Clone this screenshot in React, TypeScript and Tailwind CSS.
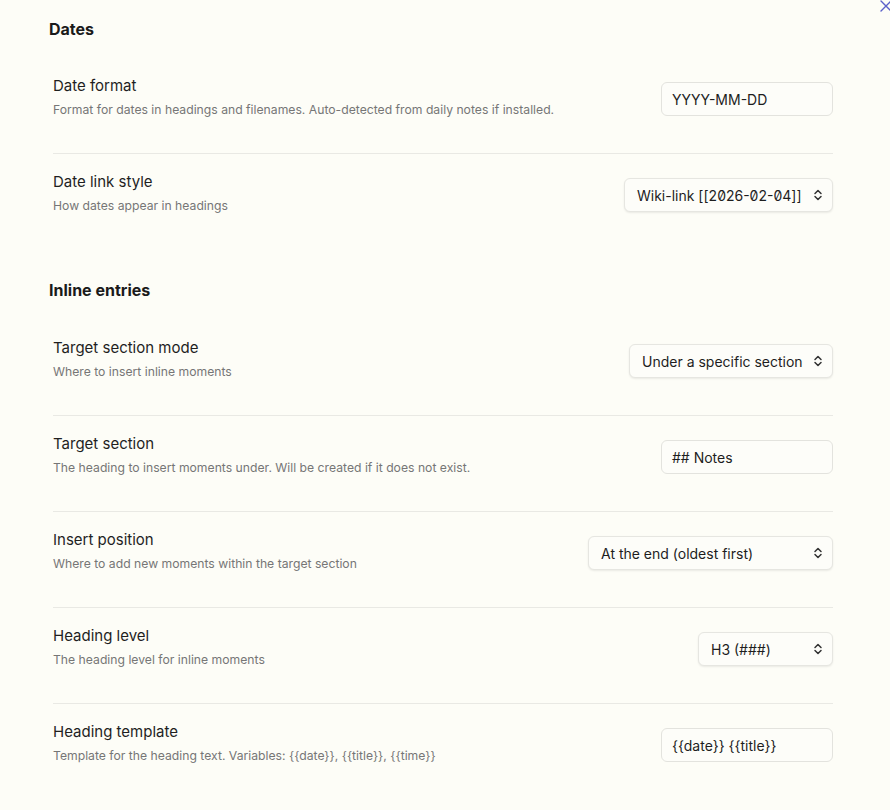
import React from "react";

const Chevrons = () => (
  <svg width="10" height="14" viewBox="0 0 10 14" fill="none" className="shrink-0">
    <path d="M2 5.5 L5 2.5 L8 5.5" stroke="#333" strokeWidth="1.5" strokeLinecap="round" strokeLinejoin="round" />
    <path d="M2 8.5 L5 11.5 L8 8.5" stroke="#333" strokeWidth="1.5" strokeLinecap="round" strokeLinejoin="round" />
  </svg>
);

const TextInput = ({ value }: { value: string }) => (
  <div className="mt-[4px] flex h-[34px] w-[172px] items-center rounded-[6px] border border-[#e3e3de] bg-[#fdfdf9] px-[10px] text-[14px] text-[#1e1e1e]">
    {value}
  </div>
);

const Select = ({ children, width }: { children: React.ReactNode; width: string }) => (
  <div
    className={`mt-[4px] flex h-[34px] items-center justify-between rounded-[6px] border border-[#e6e6e1] bg-[#fdfdf9] pl-[12px] pr-[9px] text-[14px] text-[#1e1e1e] shadow-[0_1px_2px_rgba(0,0,0,0.08)] ${width}`}
  >
    <span className="whitespace-nowrap">{children}</span>
    <Chevrons />
  </div>
);

const Row = ({
  title,
  desc,
  control,
  first,
}: {
  title: string;
  desc: string;
  control: React.ReactNode;
  first?: boolean;
}) => (
  <div
    className={`flex items-center justify-between border-t pt-[15px] pb-[32px] ${first ? "border-transparent" : "border-[#e9e9e4]"}`}
  >
    <div className="flex flex-col">
      <div className="translate-y-[1px] text-[15px] leading-6 text-[#1f1f1f]">{title}</div>
      <div className="translate-y-[1px] text-[12.2px] leading-6 text-[#767676]">{desc}</div>
    </div>
    {control}
  </div>
);

export default function App() {
  return (
    <div
      className="relative min-h-[810px] w-[890px] overflow-hidden bg-[#fdfdf7]"
      style={{ fontFamily: "Inter, 'Noto Sans', sans-serif" }}
    >
      <svg className="absolute right-[-3px] top-[-1px]" width="14" height="14" viewBox="0 0 14 14">
        <path d="M2 2 L12 12 M12 2 L2 12" stroke="#5b60c9" strokeWidth="1.4" strokeLinecap="round" />
      </svg>
      <div className="ml-[53px] w-[780px] pt-[17px]">
        <div className="-ml-1 mb-4 text-[16px] font-bold leading-6 text-[#1a1a1a]">Dates</div>
        <Row
          first
          title="Date format"
          desc="Format for dates in headings and filenames. Auto-detected from daily notes if installed."
          control={<TextInput value="YYYY-MM-DD" />}
        />
        <Row
          title="Date link style"
          desc="How dates appear in headings"
          control={
            <Select width="w-[209px]">
              Wiki-link [[<span className="[font-feature-settings:'zero']">2026-02-04</span>]]
            </Select>
          }
        />
        <div className="-ml-1 mt-[29px] mb-[17px] text-[16px] font-bold leading-6 text-[#1a1a1a]">
          Inline entries
        </div>
        <Row
          first
          title="Target section mode"
          desc="Where to insert inline moments"
          control={<Select width="w-[204px]">Under a specific section</Select>}
        />
        <Row
          title="Target section"
          desc="The heading to insert moments under. Will be created if it does not exist."
          control={<TextInput value="## Notes" />}
        />
        <Row
          title="Insert position"
          desc="Where to add new moments within the target section"
          control={<Select width="w-[245px]">At the end (oldest first)</Select>}
        />
        <Row
          title="Heading level"
          desc="The heading level for inline moments"
          control={<Select width="w-[135px]">H3 (###)</Select>}
        />
        <Row
          title="Heading template"
          desc="Template for the heading text. Variables: {{date}}, {{title}}, {{time}}"
          control={<TextInput value="{{date}} {{title}}" />}
        />
      </div>
    </div>
  );
}
